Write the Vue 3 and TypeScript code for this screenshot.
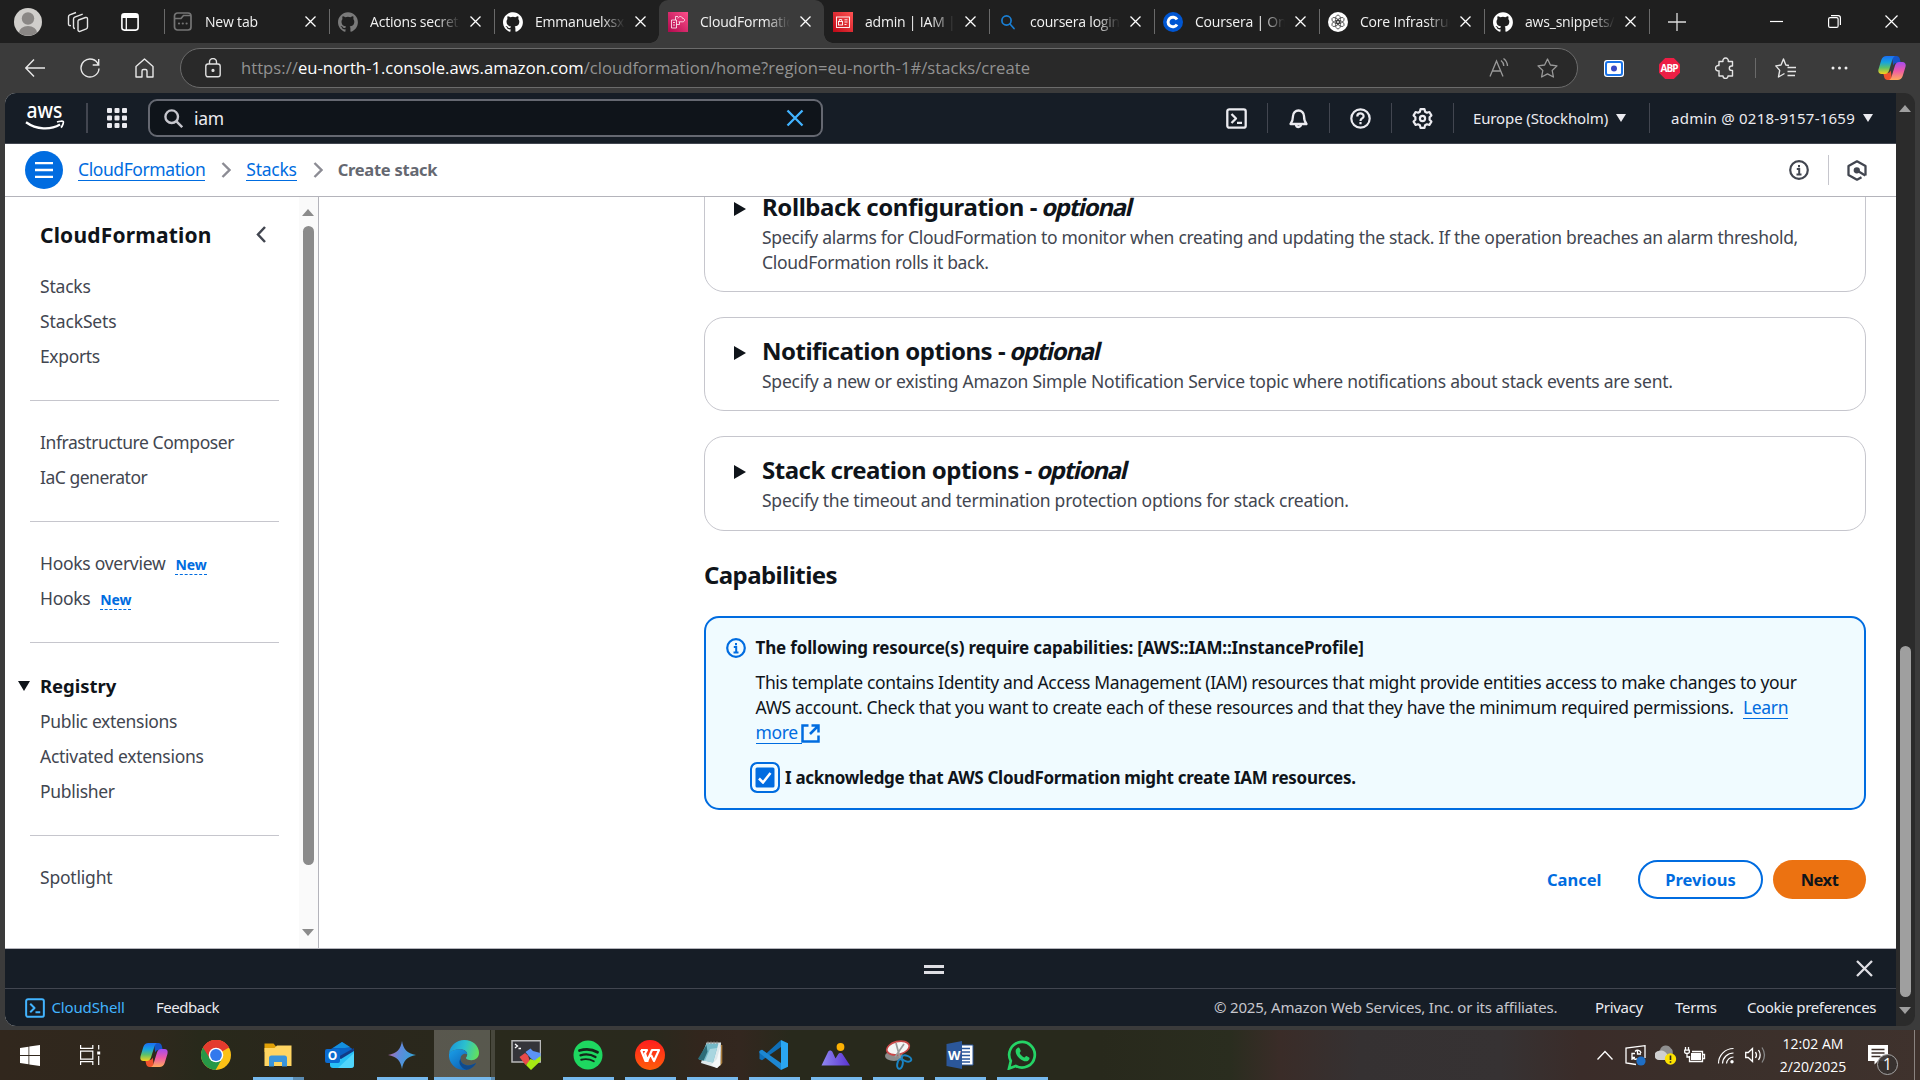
<script setup lang="ts">
interface Tab { title: string; icon: string; active?: boolean; bar?: boolean }
interface TaskItem { name: string; icon: string; open?: boolean; stacked?: boolean; active?: boolean }
interface NavItem { label: string; isNew?: boolean; spacing?: string }
interface Panel { title: string; lines: string[]; spacing: string; titleSpacing: string }

const github = (c: string) =>
  `<path fill="${c}" d="M10 .2C4.500.2 0 4.700 0 10.200c0 4.400 2.900 8.200 6.800 9.500.5.1.7-.2.7-.5v-1.900c-2.800.6-3.400-1.200-3.400-1.200-.5-1.100-1.100-1.500-1.100-1.500-.9-.6.1-.6.1-.6 1 .1 1.500 1 1.500 1 .9 1.500 2.300 1.100 2.900.8.1-.6.300-1.100.6-1.300-2.200-.3-4.600-1.100-4.600-4.900 0-1.100.4-2 1-2.700-.1-.3-.4-1.300.1-2.700 0 0 .8-.3 2.800 1a9.600 9.600 0 0 1 5 0c1.900-1.300 2.800-1 2.800-1 .5 1.400.2 2.400.1 2.700.6.7 1 1.600 1 2.700 0 3.800-2.300 4.700-4.600 4.900.4.300.7.900.7 1.900v2.800c0 .3.200.6.7.5 4-1.300 6.800-5.100 6.800-9.500C20 4.700 15.500.2 10 .2z"/>`

const copilot = `<defs>
<linearGradient id="cpA" x1="0" y1="0" x2="0" y2="1"><stop offset="0" stop-color="#1b6ef3"/><stop offset=".35" stop-color="#16a3e0"/><stop offset=".65" stop-color="#5cc06a"/><stop offset="1" stop-color="#f7d21c"/></linearGradient>
<linearGradient id="cpB" x1="0" y1="0" x2="0" y2="1"><stop offset="0" stop-color="#a44bf0"/><stop offset=".5" stop-color="#ee5aa6"/><stop offset="1" stop-color="#ffab5c"/></linearGradient></defs>
<path fill="#1554c8" d="M14 2h4.500c1.700 0 2.700 1 3.200 2.500L22.800 9h-4c-1.800 0-3 .8-3.600 2.500z"/>
<path fill="#f0532d" d="M14 26H9.500c-1.700 0-2.700-1-3.200-2.500L5.200 19h4c1.800 0 3-.8 3.600-2.500z"/>
<path fill="url(#cpA)" d="M8.600 2h8.600c-1.700.5-2.300 2-2.800 3.600l-3.300 10.700C10.400 18.600 9 20 6.800 20H3.600C.9 20-.2 18 .5 15.200L3.300 6C4.200 3.200 5.900 2 8.600 2z"/>
<path fill="url(#cpB)" d="M19.400 26h-8.600c1.700-.5 2.300-2 2.800-3.600l3.300-10.700c.7-2.300 2.100-3.700 4.300-3.700h3.200c2.700 0 3.800 2 3.100 4.800L24.700 22c-.9 2.800-2.600 4-5.300 4z"/>`

const tabs: Tab[] = [
  { title: 'New tab', icon: '<g fill="none" stroke="#757575" stroke-width="1.700"><rect x="1.500" y="1" width="16.500" height="17" rx="3"/><path d="M1.500 6.500h6.500l2.500-3h7.500"/></g><g fill="#757575"><circle cx="6" cy="11.500" r="1.100"/><circle cx="9.800" cy="11.500" r="1.100"/><circle cx="13.600" cy="11.500" r="1.100"/></g>' },
  { title: 'Actions secrets', icon: github('#7a7a7a'), bar: true },
  { title: 'Emmanuelxsx', icon: github('#fff'), bar: true },
  { title: 'CloudFormation', active: true, icon: '<defs><linearGradient id="cf" x1="0" y1="1" x2="1" y2="0"><stop stop-color="#b0084d"/><stop offset="1" stop-color="#ff4f8b"/></linearGradient></defs><path fill="url(#cf)" d="M0 0h20v20H0z"/><g fill="none" stroke="#fff" stroke-opacity=".85" stroke-width=".9"><path d="M7.500 8V4.500H10M3.500 8h5v8h-5zM5 10.500h2M5 13h2M8.500 12.500h3v-2.500M10.500 9.800h4.300c2.500-.3 2.300-3.500-.2-3.400-.6-2.500-4-2.500-4.700 0"/></g>' },
  { title: 'admin | IAM |', icon: '<defs><linearGradient id="iam" x1="0" y1="1" x2="1" y2="0"><stop stop-color="#bd0816"/><stop offset="1" stop-color="#ff5252"/></linearGradient></defs><path fill="url(#iam)" d="M0 0h20v20H0z"/><g fill="none" stroke="#fff" stroke-width=".9"><rect x="3.500" y="5" width="13" height="10.500"/><rect x="5.500" y="9.500" width="4" height="3.500"/><path d="M6.300 9.500V7.500h2.400v2M11.500 7.800h3M11.500 10h3M11.500 12.500h2"/></g>' },
  { title: 'coursera login', bar: true, icon: '<g fill="none" stroke="#1a7fd4" stroke-width="1.700" stroke-linecap="round"><circle cx="8.500" cy="8.500" r="4.600"/><path d="m12 12 4 4.500"/></g>' },
  { title: 'Coursera | Online', bar: true, icon: '<circle cx="10" cy="10" r="10" fill="#0056d2"/><path d="M14 7.600a4.800 4.800 0 1 0 0 4.800" fill="none" stroke="#fff" stroke-width="3"/>' },
  { title: 'Core Infrastructure', bar: true, icon: '<circle cx="10" cy="10" r="10" fill="#fff"/><g fill="none" stroke="#333" stroke-width=".75"><ellipse cx="10" cy="7.300" rx="2.400" ry="4.200"/><ellipse cx="10" cy="7.300" rx="2.400" ry="4.200" transform="rotate(60 10 10)"/><ellipse cx="10" cy="7.300" rx="2.400" ry="4.200" transform="rotate(120 10 10)"/><ellipse cx="10" cy="7.300" rx="2.400" ry="4.200" transform="rotate(180 10 10)"/><ellipse cx="10" cy="7.300" rx="2.400" ry="4.200" transform="rotate(240 10 10)"/><ellipse cx="10" cy="7.300" rx="2.400" ry="4.200" transform="rotate(300 10 10)"/></g>' },
  { title: 'aws_snippets/', icon: github('#fff'), bar: true },
]

const navGroups: NavItem[][] = [
  [{ label: 'Stacks', spacing: '-0.2px' }, { label: 'StackSets', spacing: '-0.12px' }, { label: 'Exports', spacing: '-0.36px' }],
  [{ label: 'Infrastructure Composer', spacing: '-0.43px' }, { label: 'IaC generator', spacing: '-0.48px' }],
  [{ label: 'Hooks overview', isNew: true, spacing: '-0.28px' }, { label: 'Hooks', isNew: true, spacing: '-0.31px' }],
]
const registry: NavItem[] = [
  { label: 'Public extensions', spacing: '-0.32px' },
  { label: 'Activated extensions', spacing: '-0.27px' },
  { label: 'Publisher', spacing: '-0.3px' },
]

const panels: Panel[] = [
  { title: 'Rollback configuration -', titleSpacing: '-0.42px', spacing: '-0.303px', lines: ['Specify alarms for CloudFormation to monitor when creating and updating the stack. If the operation breaches an alarm threshold,', 'CloudFormation rolls it back.'] },
  { title: 'Notification options -', titleSpacing: '-0.5px', spacing: '-0.235px', lines: ['Specify a new or existing Amazon Simple Notification Service topic where notifications about stack events are sent.'] },
  { title: 'Stack creation options -', titleSpacing: '-0.5px', spacing: '-0.238px', lines: ['Specify the timeout and termination protection options for stack creation.'] },
]

const tasks: TaskItem[] = [
  { name: 'Copilot', icon: `<g transform="translate(1 1)">${copilot}</g>` },
  { name: 'Chrome', icon: '<circle cx="15" cy="15" r="15" fill="#fbc116"/><path fill="#e33b2e" d="M15 15 2 7.500a15 15 0 0 1 26 0z"/><path fill="#279847" d="M15 15 2 7.500A15 15 0 0 0 14.500 30L21.500 18z"/><path fill="#e33b2e" d="M2 7.500 8.500 18 15 8h13.300a15 15 0 0 0-26.300-.5z"/><circle cx="15" cy="15" r="7.300" fill="#fff"/><circle cx="15" cy="15" r="5.900" fill="#3279ed"/>' },
  { name: 'File Explorer', open: true, stacked: true, icon: '<path fill="#e0a006" d="M1.500 3.500h9l3 3.500H28v5H1.500z"/><path fill="#ffd562" d="M1.500 8h10l2.500-2.500H28.500v20.500H1.500z"/><path fill="#3a95dc" d="M6 26.500V18a2.500 2.500 0 0 1 2.500-2.500h13A2.500 2.500 0 0 1 24 18v8.500h-5V22h-8v4.500z"/>' },
  { name: 'Outlook', icon: '<path fill="#0a62c4" d="M6 9 17 2l12 8-11 12H6z"/><path fill="#1490df" d="M17 2 8 8h12l5-1z"/><path fill="#123b86" d="M13 17 29 8v6l-14 8z"/><path fill="#28c0f5" d="M5 15l11 4 13-8v14a3 3 0 0 1-3 3H8a3 3 0 0 1-3-3z"/><path fill="#6be2ff" d="M29 13v12a3 3 0 0 1-3 3H13z" opacity=".6"/><rect y="9" width="15" height="14" rx="2" fill="#0b6bd0"/><text x="7.500" y="20" text-anchor="middle" font-family="Open Sans" font-size="12" font-weight="700" fill="#fff">O</text>' },
  { name: 'Gemini', open: true, icon: '<defs><linearGradient id="gm" x1="0" y1="0" x2="1" y2=".3"><stop offset=".1" stop-color="#b865a8"/><stop offset=".5" stop-color="#5f8bdc"/><stop offset="1" stop-color="#35a4d8"/></linearGradient></defs><path fill="url(#gm)" d="M15 1c1.200 8 5 12.500 14 14-9 1.500-12.800 6-14 14-1.200-8-5-12.500-14-14 9-1.500 12.800-6 14-14z"/>' },
  { name: 'Edge', open: true, active: true, icon: '<defs><linearGradient id="eA" x1="0" y1=".3" x2="1" y2=".5"><stop stop-color="#1b96d8"/><stop offset=".5" stop-color="#2bc0cf"/><stop offset="1" stop-color="#62e05e"/></linearGradient><linearGradient id="eB" x1="0" y1="0" x2="1" y2="1"><stop stop-color="#1aa0e8"/><stop offset="1" stop-color="#0b50a8"/></linearGradient></defs><path fill="url(#eA)" d="M0 13.500C1 5.500 7.500 0 15.200 0 24 0 30 6 30 12.800c0 4.700-3.500 7.500-7.500 7.500-3.200 0-5.600-1-5.600-2.200 0-.8 1.300-1.200 1.300-3.600 0-3-2.900-5.200-7-5.200C6.500 9.300 2 11 0 13.500z"/><path fill="url(#eB)" d="M0 14C1.500 10.800 6 9.300 10.500 9.300c4.500 0 7.700 2.200 7.700 5.200-1.200-1.800-6.700-1-6.700 4.300 0 6 7.500 9 15.500 4.200C24.500 27.500 20 30 15 30 6.500 30-.8 23 0 14z"/><path fill="#114a8b" d="M11.500 18.800c0 6 7.500 9 15.500 4.200C25 27 21 29.500 17.500 29.800 11 28 9 22 11.500 18.800z"/>' },
  { name: 'Terminal', icon: '<path fill="#35353a" stroke="#b9b9b9" stroke-width="1.500" d="M1 .8h28.500V22H1z"/><path d="m4 4 2.500 2L4 8M7.500 8.500H10" stroke="#fff" stroke-width="1.300" fill="none"/><path fill="#e94a4a" d="m8.500 17 5.500-4 3 2.500 2 6-4.500 3.500z"/><path fill="#5c93f5" d="m14.500 12 5-3.500 2.500 2.500L29.500 13v5l-5 4-5-4z"/><path fill="#a6ea13" d="m15 25 4.500-6 4 1.500 6-4.500v5l-9.500 9z"/>' },
  { name: 'Spotify', open: true, icon: '<circle cx="15" cy="15" r="14.500" fill="#1ed760"/><g fill="none" stroke="#14251a" stroke-linecap="round"><path d="M6.500 10.500c6-1.700 13-1.200 18 1.700" stroke-width="2.800"/><path d="M7.500 15.300c5-1.400 10.700-.8 15 1.700" stroke-width="2.300"/><path d="M8.200 19.700c4.300-1 8.800-.6 12.600 1.600" stroke-width="1.900"/></g>' },
  { name: 'WPS', open: true, icon: '<defs><linearGradient id="wp" x1="0" y1="0" x2="0" y2="1"><stop stop-color="#ff1e1e"/><stop offset="1" stop-color="#ff5d0a"/></linearGradient></defs><circle cx="15" cy="15" r="15" fill="url(#wp)"/><path d="M6 10h6l-2 3.500 2.500 7L17 10h7l-5 11-3-6M6 10l4.500 11h3" fill="none" stroke="#fff" stroke-width="2.200" stroke-linejoin="round"/>' },
  { name: 'Notepad', open: true, icon: '<path fill="#a87b3a" d="M24 5h1.300v18L23 26z"/><path fill="#dfe9ec" d="M9.500 2.500h14.500l-1 22-3 3.500-16-5z"/><path fill="#75b9c8" d="M9.500 3.500h12l-5.500 19-14-3z"/><path fill="#a9d6e0" d="m13 9 7-1-4 14.500-8-1.700z"/><path fill="#2d6c78" d="M9.500 5 .8 19l5.700 1.700 4-9z"/><path fill="#f5f8f9" d="M23.500 6v19l-3.500 3-6-3 6-6z"/><path d="M11 1.500v2.500M14 1.500v2.500M17 1.500v2.500M20 1.500v2.500" stroke="#888"/>' },
  { name: 'VS Code', open: true, icon: '<path fill="#0f6fb8" d="M22 0 7.500 13.200 3 9.700.5 11v8L3 20.300 22 7z"/><path fill="#1d87d2" d="M.5 11 3 9.700 22 23v7L.5 13z"/><path fill="#2aa6f2" d="M22 0l7 3.300V26.700L22 30z"/>' },
  { name: 'Photos', open: true, icon: '<defs><linearGradient id="ph" x1="0" y1="0" x2="1" y2="0"><stop stop-color="#8f86f0"/><stop offset="1" stop-color="#5a34d2"/></linearGradient></defs><circle cx="19.500" cy="7" r="3.900" fill="#fcb103"/><path fill="url(#ph)" d="M.5 25.500 7 12c1-2 3.500-2 4.500 0l3 6.500 2.500-4c1.200-1.900 3.600-1.900 4.800 0L29 25.500z"/>' },
  { name: 'Snipping Tool', open: true, icon: '<ellipse cx="11" cy="16" rx="9" ry="5" fill="#8b8b8b"/><ellipse cx="15" cy="8" rx="11.500" ry="6.500" fill="#f5f5f5" stroke="#c94848" stroke-width="1.700" transform="rotate(-14 15 8)"/><path d="m13 3 4 15M21 4l-9 13" stroke="#9a9a9a" stroke-width="1.700"/><g fill="none" stroke="#1a84c5" stroke-width="2"><ellipse cx="23.500" cy="18.500" rx="5" ry="2.800" transform="rotate(20 23.500 18.500)"/><ellipse cx="17" cy="24" rx="2.700" ry="4.800" transform="rotate(12 17 24)"/></g>' },
  { name: 'Word', open: true, icon: '<path fill="#fff" stroke="#2b579a" d="M14 5h14v20H14z"/><path d="M16 8.500h9M16 12h9M16 15.500h9M16 19h9M16 22h9" stroke="#2b579a" stroke-width="1.500"/><path fill="#2b579a" d="M1.500 4 17 1v28L1.500 26z"/><text x="9.200" y="20" text-anchor="middle" font-family="Open Sans" font-size="13" font-weight="700" fill="#fff">W</text>' },
  { name: 'WhatsApp', open: true, icon: '<path d="M2 28.500 3.800 21a12.800 12.800 0 1 1 5 5z" fill="none" stroke="#25d366" stroke-width="2.700"/><path fill="#25d366" d="M10.500 8c.8-.7 1.800-.5 2.200.4l1 2.400c.3.800-.9 1.700-1 2.200.8 1.900 2.600 3.600 4.600 4.400.6.100 1.500-1.600 2.200-1.300l2.600 1.300c1 .6.2 2.700-1.300 3.500-5.500 2.300-14-6.700-11.800-11.400.3-.6.900-1.100 1.500-1.500z"/>' },
]
</script>

<template>
  <div class="desktop">
    <header class="tabstrip">
      <div class="lead">
        <svg class="avatar" width="28" height="28" viewBox="0 0 28 28"><circle cx="14" cy="14" r="14" fill="#d0cecb" /><circle cx="14" cy="10.500" r="6.200" fill="#8a8785" /><path d="M5 24.500a9 6.500 0 0 1 18 0A14 14 0 0 1 5 24.500z" fill="#8a8785" /></svg>
        <svg class="spaces" width="22" height="22" viewBox="0 0 22 22" fill="none" stroke="#e6e6e6" stroke-width="1.400" stroke-linejoin="round"><path d="m11.500 9 7-2.500c1-.3 2 .3 2 1.400v8.200c0 .8-.5 1.400-1.200 1.700L13 20.300c-1 .4-2-.3-2-1.300v-8.500c0-.7 0-1.200.5-1.500z" /><path d="M8 17.500c-1 0-1.500-.7-1.500-1.500V8c0-1 .4-1.500 1.200-1.800l8-3M4 14.500c-1.500.3-2.500-.2-2.500-1.500V5.700c0-1 .4-1.500 1.200-1.800L9 1.500" /></svg>
        <svg class="tabact" width="18" height="18" viewBox="0 0 18 18"><rect x=".9" y=".9" width="16.200" height="16.200" rx="2.500" fill="none" stroke="#fff" stroke-width="1.600" /><path d="M1 2.500C1 1.500 1.700 1 2.500 1h13c1 0 1.500.5 1.500 1.500V5H1z" fill="#fff" /><path d="M5.300 5v12" stroke="#fff" stroke-width="1.300" /></svg>
      </div>
      <div v-for="t in tabs" :key="t.title" class="tab" :class="{ active: t.active, bar: t.bar || t.title === 'New tab' }">
        <svg class="fav" width="20" height="20" viewBox="0 0 20 20" v-html="t.icon" />
        <span class="tabtitle">{{ t.title }}</span>
        <svg class="tabx" width="11" height="11" viewBox="0 0 11 11" stroke="#fff" stroke-width="1.300"><path d="m.5.5 10 10M10.500.5l-10 10" /></svg>
      </div>
      <div class="newtab"><svg width="18" height="18" viewBox="0 0 18 18" stroke="#ddd" stroke-width="1.300"><path d="M9 0v18M0 9h18" /></svg></div>
      <div class="wincontrols">
        <svg width="13" height="13" viewBox="0 0 13 13" stroke="#fff" stroke-width="1.200"><path d="M0 6.500h13" /></svg>
        <svg width="13" height="13" viewBox="0 0 13 13" fill="none" stroke="#fff" stroke-width="1.200"><rect x=".6" y="2.600" width="9.500" height="9.800" rx="1.500" /><path d="M3 .7h7.200a2.200 2.200 0 0 1 2.200 2.200V10" /></svg>
        <svg width="13" height="13" viewBox="0 0 13 13" stroke="#fff" stroke-width="1.200"><path d="m.5.5 12 12M12.500.5l-12 12" /></svg>
      </div>
    </header>

    <div class="toolbar">
      <svg class="t-back" width="20" height="20" viewBox="0 0 20 20" fill="none" stroke="#e8e8e8" stroke-width="1.400"><path d="M9 1.500.8 10 9 18.500M1 10h19" /></svg>
      <svg class="t-reload" width="20" height="20" viewBox="0 0 20 20" fill="none" stroke="#e8e8e8" stroke-width="1.400"><path d="M18.500 7A9 9 0 1 0 19 10.500M18.700 1v6h-6" /></svg>
      <svg class="t-home" width="19" height="20" viewBox="0 0 19 20" fill="none" stroke="#e8e8e8" stroke-width="1.400" stroke-linejoin="round"><path d="M1 8.500 9.500 1 18 8.500V19h-6v-6c0-1-.5-1.500-1.500-1.500h-2C7.500 11.500 7 12 7 13v6H1z" /></svg>
      <div class="address">
        <svg class="lock" width="16" height="20" viewBox="0 0 16 20" fill="none" stroke="#e0e0e0" stroke-width="1.400"><rect x=".8" y="6" width="14.400" height="12.800" rx="2.200" /><path d="M4.500 6V4a3.500 3.500 0 0 1 7 0v2" /><circle cx="8" cy="12.400" r=".9" fill="#e0e0e0" /></svg>
        <span class="url">https://<b>eu-north-1.console.aws.amazon.com</b>/cloudformation/home?region=eu-north-1#/stacks/create</span>
        <svg class="read" width="20" height="20" viewBox="0 0 20 20" fill="none" stroke="#9a9a9a" stroke-width="1.300"><path d="M1 18.500 7.500 3 14 18.500M3.200 13h8.600M12 2.500a7 7 0 0 1 2.800 5.500M14.500.5a10 10 0 0 1 4 7.500" /></svg>
        <svg class="star" width="21" height="20" viewBox="0 0 21 20" fill="none" stroke="#9a9a9a" stroke-width="1.300" stroke-linejoin="round"><path d="m10.500 1 2.900 6 6.600.9-4.800 4.600 1.200 6.500-5.900-3.100L4.600 19l1.200-6.500L1 7.900 7.600 7z" /></svg>
      </div>
      <svg class="t-cam" width="20" height="17" viewBox="0 0 20 17"><rect width="20" height="17" rx="3" fill="#fff" /><rect x="2" y="2" width="16" height="13" rx="2" fill="#fff" stroke="#1a73e8" stroke-width="2" /><ellipse cx="10" cy="8.500" rx="3" ry="2.900" fill="#3949c6" /></svg>
      <svg class="t-abp" width="21" height="21" viewBox="0 0 21 21"><path fill="#ed1e45" d="M6.200 0h8.600L21 6.200v8.600L14.800 21H6.200L0 14.800V6.200z" /><text x="10.500" y="14.200" text-anchor="middle" textLength="18" font-family="Open Sans" font-size="10" font-weight="700" fill="#fff">ABP</text></svg>
      <svg class="t-puz" width="20" height="22" viewBox="0 0 20 22" fill="none" stroke="#e4e4e4" stroke-width="1.400" stroke-linejoin="round"><path d="M4 4.500h4a2.700 2.700 0 1 1 5.200 0H17.500V9h-1a2.200 2.200 0 0 0 0 4.400h1V19H13a2.500 2.500 0 0 1-5 0H4v-5.200a2.700 2.700 0 1 1 0-5.200z" /></svg>
      <i class="t-div" />
      <svg class="t-favs" width="21" height="20" viewBox="0 0 21 20" fill="none" stroke="#e4e4e4" stroke-width="1.400" stroke-linejoin="round"><path d="M14 7.500 10.800 7 8.500 1 6 7l-5.200.9 3.900 4.500L3.500 19l6-3.500M12.500 9.500H21M12.500 13.500H21M12.500 17.500H20" /></svg>
      <svg class="t-dots" width="17" height="4" viewBox="0 0 17 4" fill="#eee"><circle cx="2" cy="2" r="1.500" /><circle cx="8.500" cy="2" r="1.500" /><circle cx="15" cy="2" r="1.500" /></svg>
      <svg class="t-copilot" width="28" height="28" viewBox="0 0 28 28" v-html="copilot" />
    </div>

    <div class="window">
      <div class="page">
        <div class="awsbar">
          <svg class="awslogo" width="40" height="26" viewBox="0 0 40 26"><text x="19.500" y="12.800" text-anchor="middle" textLength="36" lengthAdjust="spacingAndGlyphs" font-family="Noto Sans" font-size="21.500" font-weight="500" fill="#fff">aws</text><path d="M1 17.300c10.500 7.500 24.500 8 34 2.200" fill="none" stroke="#fff" stroke-width="2.300" /><path d="M32 17c2.500-.9 5.900-1 6.300-.4.400.8-.5 3.900-2.300 6" fill="none" stroke="#fff" stroke-width="1.700" /></svg>
          <i class="vd d1" />
          <svg class="grid" width="20" height="20" viewBox="0 0 20 20" fill="#ebebf0"><rect width="5" height="5" rx="1" /><rect x="7.500" width="5" height="5" rx="1" /><rect x="15" width="5" height="5" rx="1" /><rect y="7.500" width="5" height="5" rx="1" /><rect x="7.500" y="7.500" width="5" height="5" rx="1" /><rect x="15" y="7.500" width="5" height="5" rx="1" /><rect y="15" width="5" height="5" rx="1" /><rect x="7.500" y="15" width="5" height="5" rx="1" /><rect x="15" y="15" width="5" height="5" rx="1" /></svg>
          <div class="search">
            <svg width="19" height="19" viewBox="0 0 19 19" fill="none" stroke="#c6c6cd" stroke-width="2.400"><circle cx="7.700" cy="7.700" r="6.300" /><path d="m12.200 12.200 6 6" /></svg>
            <span>iam</span>
            <svg class="clear" width="18" height="18" viewBox="0 0 18 18" stroke="#42b4ff" stroke-width="2.300"><path d="m1.500 1.500 15 15M16.500 1.500l-15 15" /></svg>
          </div>
          <div class="tools">
            <svg class="tool" width="21" height="21" viewBox="0 0 21 21" fill="none" stroke="#ebebf0" stroke-width="2.300" stroke-linejoin="round"><rect x="1.300" y="1.300" width="18.400" height="18.400" rx="2" /><path d="m5.500 6 4.500 4.500L5.500 15M11 14.800h5" /></svg>
            <i class="vd" />
            <svg class="tool" width="21" height="21" viewBox="0 0 21 21" fill="none" stroke="#ebebf0" stroke-width="2.300" stroke-linejoin="round"><path d="M2.500 16c1.800-2.200 2.500-4 2.500-8a5.500 5.500 0 0 1 11 0c0 4 .7 5.800 2.500 8zM8 16.500a2.500 2.500 0 0 0 5 0" /></svg>
            <i class="vd" />
            <svg class="tool" width="21" height="21" viewBox="0 0 21 21" fill="none" stroke="#ebebf0" stroke-width="2.200"><circle cx="10.500" cy="10.500" r="9.200" /><path d="M7.300 8.500c0-4 6.300-4 6.300-.3 0 2.300-3.100 2.300-3.100 4.700M10.500 14v2.300" /></svg>
            <i class="vd" />
            <svg class="tool" width="21" height="21" viewBox="0 0 21 21" fill="none" stroke="#ebebf0" stroke-width="2.200" stroke-linejoin="round"><path d="M8.500 1.200h4l.6 2.500 1.800 1 2.500-.7 2 3.400-1.800 1.900v2.400l1.800 1.900-2 3.400-2.500-.7-1.800 1-.6 2.500h-4l-.6-2.500-1.800-1-2.500.7-2-3.400 1.800-1.900V9.300L1.600 7.400l2-3.400 2.500.7 1.800-1z" /><circle cx="10.500" cy="10.500" r="2.600" /></svg>
            <i class="vd" />
          </div>
          <div class="region"><span>Europe (Stockholm)</span><i class="caret" /></div>
          <i class="vd d2" />
          <div class="account"><span>admin @ 0218-9157-1659</span><i class="caret" /></div>
        </div>

        <nav class="crumbs">
          <div class="menu"><svg width="20" height="18" viewBox="0 0 20 18" stroke="#fff" stroke-width="2.300"><path d="M1 2.200h18M1 9h18M1 15.800h18" /></svg></div>
          <a class="c1">CloudFormation</a>
          <svg class="chev" width="10" height="16" viewBox="0 0 10 16" fill="none" stroke="#8c8c94" stroke-width="2.400"><path d="m1.500 1 7 7-7 7" /></svg>
          <a class="c2">Stacks</a>
          <svg class="chev" width="10" height="16" viewBox="0 0 10 16" fill="none" stroke="#8c8c94" stroke-width="2.400"><path d="m1.500 1 7 7-7 7" /></svg>
          <b>Create stack</b>
          <svg class="cinfo" width="20" height="20" viewBox="0 0 20 20" fill="none" stroke="#424650" stroke-width="2.200"><circle cx="10" cy="10" r="8.800" /><path d="M7.800 9h2.400v5.500M7.500 14.500h5M10 5v2.300" stroke-width="2" /></svg>
          <i class="cdiv" />
          <svg class="chex" width="20" height="21" viewBox="0 0 20 21" fill="none" stroke="#424650" stroke-width="2.300" stroke-linejoin="round"><path d="M14.500 17.200 10 19.700 1.500 15V6L10 1.300 18.500 6v9.500" /><path d="M10 10.500 18.300 15.500" /><circle cx="9.800" cy="10.300" r="2" fill="#424650" /></svg>
        </nav>

        <div class="body">
          <aside class="side">
            <div class="sidenav">
              <div class="sidehead"><h2>CloudFormation</h2><svg width="10" height="17" viewBox="0 0 10 17" fill="none" stroke="#424650" stroke-width="2.500"><path d="m9 1-7 7.500L9 16" /></svg></div>
              <template v-for="(g, i) in navGroups" :key="i">
                <a v-for="n in g" :key="n.label" class="nav"><span :style="{ letterSpacing: n.spacing }">{{ n.label }}</span><em v-if="n.isNew">New</em></a>
                <hr>
              </template>
              <div class="reg"><i />Registry</div>
              <a v-for="n in registry" :key="n.label" class="nav"><span :style="{ letterSpacing: n.spacing }">{{ n.label }}</span></a>
              <hr>
              <a class="nav"><span class="spot">Spotlight</span></a>
            </div>
            <div class="sidebar-scroll"><i class="up" /><i class="thumb" /><i class="down" /></div>
          </aside>

          <main class="main">
            <section v-for="p in panels" :key="p.title" class="card">
              <i class="tri" />
              <div class="cardtext">
                <h3><span :style="{ letterSpacing: p.titleSpacing }">{{ p.title }}</span> <em>optional</em></h3>
                <p :style="{ letterSpacing: p.spacing }"><span v-for="l in p.lines" :key="l">{{ l }}</span></p>
              </div>
            </section>
            <h3 class="cap">Capabilities</h3>
            <section class="alert">
              <svg class="ainfo" width="20" height="20" viewBox="0 0 20 20" fill="none" stroke="#006ce0" stroke-width="2.200"><circle cx="10" cy="10" r="8.800" /><path d="M7.800 9h2.400v5.500M7.500 14.500h5M10 5v2.300" stroke-width="2" /></svg>
              <div class="atext">
                <b class="atitle">The following resource(s) require capabilities: [AWS::IAM::InstanceProfile]</b>
                <p><span class="l1">This template contains Identity and Access Management (IAM) resources that might provide entities access to make changes to your</span><br><span class="l2">AWS account. Check that you want to create each of these resources and that they have the minimum required permissions.</span><a class="learn">Learn</a><br><a class="more">more&nbsp;</a><svg class="ext" width="19" height="19" viewBox="0 0 19 19" fill="none" stroke="#006ce0" stroke-width="2.500"><path d="M7.500 1.500h-6v16h16v-6M10.500 1.500h7v7M17 2l-8 8" /></svg></p>
                <label class="ack"><span class="box"><svg width="14" height="12" viewBox="0 0 14 12" fill="none" stroke="#fff" stroke-width="2.500"><path d="m1 6.500 4 4L12.500 1" /></svg></span><b>I acknowledge that AWS CloudFormation might create IAM resources.</b></label>
              </div>
            </section>
            <div class="actions">
              <button class="cancel">Cancel</button>
              <button class="prev">Previous</button>
              <button class="next">Next</button>
            </div>
          </main>
        </div>

        <div class="splitbar">
          <span class="grip"><i /><i /></span>
          <svg width="17" height="17" viewBox="0 0 17 17" stroke="#dedee3" stroke-width="2.300"><path d="m1 1 15 15M16 1 1 16" /></svg>
        </div>
        <footer class="foot">
          <svg width="20" height="20" viewBox="0 0 21 21" fill="none" stroke="#42b4ff" stroke-width="2.100" stroke-linejoin="round"><rect x="1.200" y="1.200" width="18.600" height="18.600" rx="2" /><path d="m5.500 6 4.500 4.500L5.500 15M11 15h5" /></svg>
          <span class="cs">CloudShell</span>
          <span class="fb">Feedback</span>
          <span class="copy">© 2025, Amazon Web Services, Inc. or its affiliates.</span>
          <span class="pv">Privacy</span>
          <span class="tm">Terms</span>
          <span class="ck">Cookie preferences</span>
        </footer>
      </div>
      <div class="scroll"><i class="up" /><i class="thumb" /><i class="down" /></div>
    </div>

    <div class="taskbar">
      <div class="tstart"><svg width="20" height="21" viewBox="0 0 20 21" fill="#fff"><path d="M0 3 8.500 1.700V10H0zM9.300 1.600 20 0v10H9.300zM0 10.900h8.500v8.300L0 18zM9.300 10.900H20V21L9.300 19.400z" /></svg></div>
      <div class="tview"><svg width="21" height="20" viewBox="0 0 21 20" fill="none" stroke="#fff" stroke-width="1.200"><path d="M.6 0v3.400h12.200V0M.6 20v-3.400h12.200V20M.6 6.200h12.200v8H.6zM18.700 0v4.500M18.700 11v9" /><path d="M17.200 6.500h3v3h-3z" fill="#fff" stroke="none" /></svg></div>
      <div v-for="t in tasks" :key="t.name" class="task" :class="{ open: t.open, stacked: t.stacked, active: t.active }">
        <svg width="30" height="30" viewBox="0 0 30 30" v-html="t.icon" />
      </div>
      <div class="tray">
        <svg class="y1" width="16" height="10" viewBox="0 0 16 10" fill="none" stroke="#fff" stroke-width="1.300"><path d="m.5 9.500 7.500-8 7.500 8" /></svg>
        <svg class="y2" width="21" height="21" viewBox="0 0 21 21" fill="none" stroke="#fff" stroke-width="1.300"><path d="M11 19.500 1 18V3l19-2.300V13M7 13V8.500h3M12.500 5.500V9H16M6.800 11c.5 3 3.200 4 5.500 2.700M16 8c-.6-2.700-4-3.700-6-1.500M7 15v-2.500h3" /><circle cx="16" cy="16" r="4.600" fill="#1f6fc6" stroke="none" /></svg>
        <svg class="y3" width="22" height="20" viewBox="0 0 22 20"><path fill="#8f8f8f" d="M4 14a5 5 0 0 1 1-9 6 6 0 0 1 11-1.500C19 5 18 12 15 14z" /><path fill="#d0d0d0" d="M4 15a4.500 4.500 0 0 1 0-9c3-1.500 6 0 8 3v6z" /><circle cx="15.500" cy="14" r="5.700" fill="#fce100" /><path d="M15.500 10.500v4.500M15.500 16.300v1.500" stroke="#222" stroke-width="1.600" /></svg>
        <svg class="y4" width="22" height="16" viewBox="0 0 22 16" fill="none" stroke="#fff" stroke-width="1.300"><path d="M5.500 9v5.500h13V4.500H8M18.500 7.500h2v4h-2M1.500 0v3M4.500 0v3M.7 3.200h4.600v2c0 1.500-4.600 1.500-4.600 0zM3 6.500v3.500h2.500" /><path fill="#fff" stroke="none" d="M7 6h10v7H7z" /></svg>
        <svg class="y5" width="18" height="17" viewBox="0 0 18 17" fill="none" stroke="#fff" stroke-width="1.200"><path d="M1.500 16.500A15 15 0 0 1 16.500 1.500M5.500 16.500a11 11 0 0 1 11-10.500M9.500 16.500a7 7 0 0 1 7-6.500" /><circle cx="15" cy="14.700" r="1.700" fill="#fff" stroke="none" /></svg>
        <svg class="y6" width="21" height="18" viewBox="0 0 21 18" fill="none" stroke="#fff" stroke-width="1.300"><path d="M.7 6.500h2.500L7.500 2.500v13l-4.300-4H.7zM10.500 6c1.300 2 1.300 4 0 6M13.500 4c2.200 3.300 2.200 6.700 0 10" /><path d="M17 1.500c3.300 5 3.300 10 0 15" stroke="#888" /></svg>
        <div class="clock"><span>12:02 AM</span><span>2/20/2025</span></div>
        <div class="notif">
          <svg width="32" height="32" viewBox="0 0 32 32"><path fill="#fff" d="M1 1h20v16H11l-3.500 3.500V17H1z" /><path d="M4.500 5.500h13M4.500 9h13M4.500 12.500h9" stroke="#3a2d28" stroke-width="1.400" /><circle cx="20.500" cy="20.500" r="10" fill="#37322f" fill-opacity=".93" stroke="#a5a5a5" /><text x="20.500" y="26" text-anchor="middle" font-family="Open Sans" font-size="15.500" fill="#fff">1</text></svg>
        </div>
        <i class="peek" />
      </div>
    </div>
  </div>
</template>

<style>
body { margin: 0; overflow: hidden; }
</style>

<style scoped>
* { box-sizing: border-box; }
svg { display: block; flex: none; }
i { display: block; flex: none; }
h2, h3, p { margin: 0; }
.desktop { width: 1920px; height: 1080px; display: flex; flex-direction: column; background: #3b3b3b; font-family: 'Noto Sans', sans-serif; overflow: hidden; white-space: nowrap; }

.tabstrip { height: 43px; flex: none; display: flex; background: #1f1f1f; font-family: 'Open Sans', sans-serif; }
.lead { width: 164px; display: flex; align-items: center; padding-left: 14px; }
.spaces { margin-left: 25px; }
.tabact { margin-left: 32px; }
.tab { width: 165px; display: flex; align-items: center; padding-left: 9px; position: relative; color: #f2f2f2; font-size: 14px; }
.tab.bar::before { content: ''; position: absolute; left: 0; top: 9px; height: 25px; width: 1px; background: #6a6a6a; }
.tab.active { background: #3b3b3b; border-radius: 9px 9px 0 0; }
.tab.active::before, .tab.active::after { content: ''; position: absolute; bottom: 0; width: 9px; height: 9px; }
.tab.active::before { left: -9px; background: radial-gradient(circle at 0 0, #1f1f1f 8.5px, #3b3b3b 9px); }
.tab.active::after { right: -9px; background: radial-gradient(circle at 100% 0, #1f1f1f 8.5px, #3b3b3b 9px); }
.tabtitle { margin-left: 12px; width: 90px; margin-top: -1px; overflow: hidden; letter-spacing: -0.2px; -webkit-mask-image: linear-gradient(90deg, #000 66px, transparent 90px); mask-image: linear-gradient(90deg, #000 66px, transparent 90px); }
.tabx { margin-left: 10px; }
.newtab { width: 121px; padding-left: 18px; display: flex; align-items: center; border-left: 1px solid #6a6a6a; height: 25px; margin-top: 9px; }
.wincontrols { display: flex; align-items: center; gap: 44.5px; }

.toolbar { height: 50px; flex: none; display: flex; align-items: center; padding-left: 25px; }
.t-reload { margin-left: 35px; }
.t-home { margin-left: 35px; }
.address { margin-left: 26px; width: 1398px; height: 40px; border: 1px solid #6b6b6b; border-radius: 20px; background: #292929; display: flex; align-items: center; padding-left: 24px; }
.url { margin-left: 20px; width: 1248px; font: 16.6px/30px 'Open Sans', sans-serif; letter-spacing: 0.035px; color: #929292; padding-bottom: 1px; }
.url b { font-weight: 400; color: #fff; }
.star { margin-left: 28px; }
.t-cam { margin-left: 26px; }
.t-abp { margin-left: 35px; }
.t-puz { margin-left: 35px; }
.t-div { width: 1px; height: 20px; background: #6a6a6a; margin-left: 20px; }
.t-favs { margin-left: 19px; }
.t-dots { margin-left: 35px; }
.t-copilot { margin-left: 30px; }

.window { display: flex; height: 933px; flex: none; margin: 0 5px; border-radius: 11px; overflow: hidden; }
.page { width: 1891px; flex: none; display: flex; flex-direction: column; background: #fff; }
.scroll { width: 19px; background: #2b2b2b; position: relative; }
.scroll .up, .scroll .down, .sidebar-scroll .up, .sidebar-scroll .down { position: absolute; border: 6.5px solid transparent; border-top-width: 0; border-bottom: 7px solid #9f9f9f; }
.scroll .up { left: 3px; top: 12px; }
.scroll .down { left: 3px; bottom: 12px; transform: rotate(180deg); }
.scroll .thumb { position: absolute; left: 4px; top: 553px; width: 11px; height: 351px; border-radius: 6px; background: #9f9f9f; }

.awsbar { height: 51px; flex: none; background: #161d26; border-bottom: 1px solid #424650; display: flex; align-items: center; padding-left: 20px; color: #ebebf0; font-size: 15px; }
.vd { width: 1px; height: 30px; background: #424650; }
.d1 { margin-left: 21px; width: 2px; }
.grid { margin-left: 19px; }
.search { margin-left: 21px; width: 675px; height: 38px; border: 2px solid #656871; border-radius: 9px; background: #0f141a; display: flex; align-items: center; padding-left: 14px; font-size: 17.5px; letter-spacing: -0.3px; }
.search span { margin-left: 11px; width: 592px; padding-bottom: 1px; }
.clear { margin: 0; }
.tools { margin-left: 402.5px; display: flex; align-items: center; gap: 20px; }
.region { display: flex; align-items: center; margin-left: 19.5px; letter-spacing: -0.13px; }
.caret { border: 5px solid transparent; border-top: 8px solid #ebebf0; border-bottom: 0; margin-left: 8px; }
.d2 { margin-left: 23px; }
.account { display: flex; align-items: center; margin-left: 21px; letter-spacing: 0.24px; }

.crumbs { height: 53px; flex: none; border-bottom: 1px solid #b4b4bb; display: flex; align-items: center; padding-left: 20px; font-size: 17.5px; color: #656871; }
.menu { width: 38px; height: 38px; border-radius: 50%; background: #006ce0; display: flex; align-items: center; justify-content: center; }
.crumbs a { color: #006ce0; border-bottom: 1px solid #006ce0; line-height: 21px; }
.c1 { margin-left: 15px; letter-spacing: -0.41px; }
.c2 { margin-left: 15px; letter-spacing: -0.26px; }
.chev { margin-left: 16px; }
.crumbs b { margin-left: 15px; font-size: 16.5px; letter-spacing: -0.26px; padding-bottom: 2px; }
.cinfo { margin-left: auto; }
.cdiv { width: 1px; height: 30px; background: #c6c6cd; margin-left: 19px; }
.chex { margin: 0 29px 0 18px; }

.body { height: 751px; flex: none; display: flex; }
.side { width: 314px; display: flex; border-right: 1px solid #b4b4bb; }
.sidenav { width: 294px; padding: 0 20px 0 25px; font-size: 17.5px; letter-spacing: -0.34px; color: #424650; }
.sidehead { height: 73px; padding: 2px 13px 0 10px; display: flex; justify-content: space-between; align-items: center; }
.sidehead h2 { font-size: 21px; line-height: 28px; letter-spacing: 0.18px; color: #0f141a; }
.nav { display: flex; align-items: center; height: 35px; padding: 0 0 3px 10px; }
.nav em { font-style: normal; font-weight: 700; font-size: 14px; line-height: 18px; letter-spacing: -0.1px; color: #006ce0; border-bottom: 1px dashed #006ce0; margin: 4px 0 0 10px; }
.spot { letter-spacing: -0.2px; }
hr { border: 0; height: 1px; background: #c6c6cd; margin: 25px 0; }
.reg { height: 37px; display: flex; align-items: center; font-weight: 700; font-size: 18.5px; letter-spacing: -0.05px; color: #0f141a; margin-left: -12px; padding-bottom: 2px; }
.reg i { border: 6px solid transparent; border-top: 10px solid #0f141a; border-bottom: 0; margin-right: 10px; }
.sidebar-scroll { width: 19px; background: #fafafa; position: relative; }
.sidebar-scroll .up { border-bottom-color: #8b8b8b; left: 3px; top: 12px; }
.sidebar-scroll .down { border-bottom-color: #8b8b8b; left: 3px; bottom: 12px; transform: rotate(180deg); }
.sidebar-scroll .thumb { position: absolute; left: 4px; top: 29px; width: 11px; height: 639px; border-radius: 6px; background: #8b8b8b; }

.main { width: 1577px; padding: 0 30px 0 385px; overflow: hidden; display: flex; flex-direction: column; }
.card { border: 1px solid #c6c6cd; border-radius: 20px; padding: 18px 0 16px 29px; display: flex; flex: none; margin-bottom: 25px; }
.card:first-child { margin-top: -24px; }
.card:nth-child(3) { padding-bottom: 17px; }
.tri { border: 7.5px solid transparent; border-left: 12.500px solid #0f141a; border-right: 0; margin-top: 9.500px; margin-right: 16px; align-self: flex-start; }
h3 { font-size: 24px; line-height: 30px; color: #0f141a; }
h3 em { display: inline-block; font-style: normal; transform: skewX(-13deg); letter-spacing: -1.3px; }
.card p { margin-top: 3px; font-size: 17.5px; line-height: 25px; color: #424650; }
.card p span { display: block; }
.cap { letter-spacing: -0.58px; margin: 4px 0 26px; }
.alert { height: 194px; flex: none; border: 2px solid #006ce0; border-radius: 15px; background: #f0fbff; display: flex; padding: 17px 0 0 20px; color: #0f141a; }
.ainfo { margin-top: 3px; }
.atext { margin-left: 9.500px; font-size: 17.5px; line-height: 25px; }
.atitle { display: block; font-size: 17px; letter-spacing: -0.16px; }
.atext p { margin-top: 10px; }
.l1 { letter-spacing: -0.348px; }
.l2 { letter-spacing: -0.324px; }
.atext a { color: #006ce0; letter-spacing: -0.35px; display: inline-block; line-height: 22px; border-bottom: 1px solid #006ce0; }
.learn { margin-left: 9.500px; }
.ext { display: inline-block; vertical-align: -4px; margin-left: -1px; }
.ack { display: flex; align-items: center; margin-top: 17px; margin-left: -5.500px; }
.ack b { font-size: 17px; letter-spacing: -0.3px; margin-left: 5px; }
.box { width: 30px; height: 31px; border: 2px solid #006ce0; border-radius: 7px; background: #006ce0; box-shadow: inset 0 0 0 3.5px #f0fbff; display: flex; align-items: center; justify-content: center; }
.actions { display: flex; justify-content: flex-end; margin-top: 50px; }
.actions button { height: 39px; border-radius: 20px; font: 700 16.5px/20px 'Noto Sans', sans-serif; padding: 0; border: 0; background: none; color: #006ce0; }
.actions .cancel { width: 54px; margin-right: 37px; }
.actions .prev { width: 125px; border: 2px solid #006ce0; margin-right: 10px; }
.actions .next { width: 93px; background: #ec7211; color: #0f141a; letter-spacing: -0.5px; }

.splitbar { height: 41px; flex: none; background: #161d26; border-top: 1px solid #b4b4bb; border-bottom: 1px solid #424650; display: flex; align-items: center; padding: 0 23px 0 919px; justify-content: space-between; }
.splitbar svg { margin-top: -1px; }
.grip { display: flex; flex-direction: column; gap: 3px; width: 20px; padding-top: 2px; }
.grip i { height: 3px; background: #dedee3; }
.foot { height: 37px; flex: none; background: #161d26; display: flex; align-items: center; padding-left: 20px; font-size: 15px; color: #ebebf0; }
.foot span { margin-top: -2px; }
.cs { color: #42b4ff; margin-left: 6.500px; letter-spacing: -0.15px; width: 104.5px; }
.fb { letter-spacing: -0.47px; width: 1058px; }
.copy { color: #c6c6cd; letter-spacing: -0.19px; width: 381px; }
.pv { letter-spacing: -0.3px; width: 80px; }
.tm { letter-spacing: -0.3px; width: 72px; }
.ck { letter-spacing: -0.36px; }

.taskbar { height: 50px; margin-top: 4px; flex: none; display: flex; background: linear-gradient(90deg, #31271d 0, #2f281d 150px, #28291b 200px, #2b261c 330px, #29291c 480px, #29291d 650px, #32261d 700px, #33271f 740px, #28291c 790px, #28291c 1100px, #2a2d1f 1230px, #3a2c28 1280px, #353132 1360px, #363233 1500px, #3a2c29 1580px, #3a2f2a 1700px, #3f322d 1920px); }
.tstart { width: 60px; display: flex; align-items: center; justify-content: center; }
.tview { width: 63px; display: flex; align-items: center; padding-left: 20px; }
.task { width: 62px; display: flex; align-items: center; justify-content: center; position: relative; }
.task.open::after { content: ''; position: absolute; left: 6px; width: 51px; bottom: 0; height: 3px; background: #76b9ed; }
.task.stacked::after { background: linear-gradient(90deg, #76b9ed 40px, #5b8cb2 40px); }
.task.active::before { content: ''; position: absolute; inset: 0 0 0 1px; background: linear-gradient(90deg, rgba(255, 255, 255, 0.22) 56px, transparent 56px 57px, rgba(255, 255, 255, 0.14) 57px); }
.task.active::after { left: 1px; width: 61px; background: linear-gradient(90deg, #76b9ed 57px, #5b8cb2 57px); }
.task svg { position: relative; }
.tray { margin-left: auto; display: flex; align-items: center; color: #fff; }
.y2 { margin-left: 12px; }
.y3 { margin-left: 9px; }
.y4 { margin-left: 7px; }
.y5 { margin-left: 11px; }
.y6 { margin-left: 10px; }
.clock { width: 94px; display: flex; flex-direction: column; align-items: center; font: 14px/23px 'Open Sans', sans-serif; }
.notif { margin-left: 7px; padding-top: 10px; }
.peek { width: 1px; height: 50px; background: #8a8380; margin: 0 5px 0 15px; }
</style>
